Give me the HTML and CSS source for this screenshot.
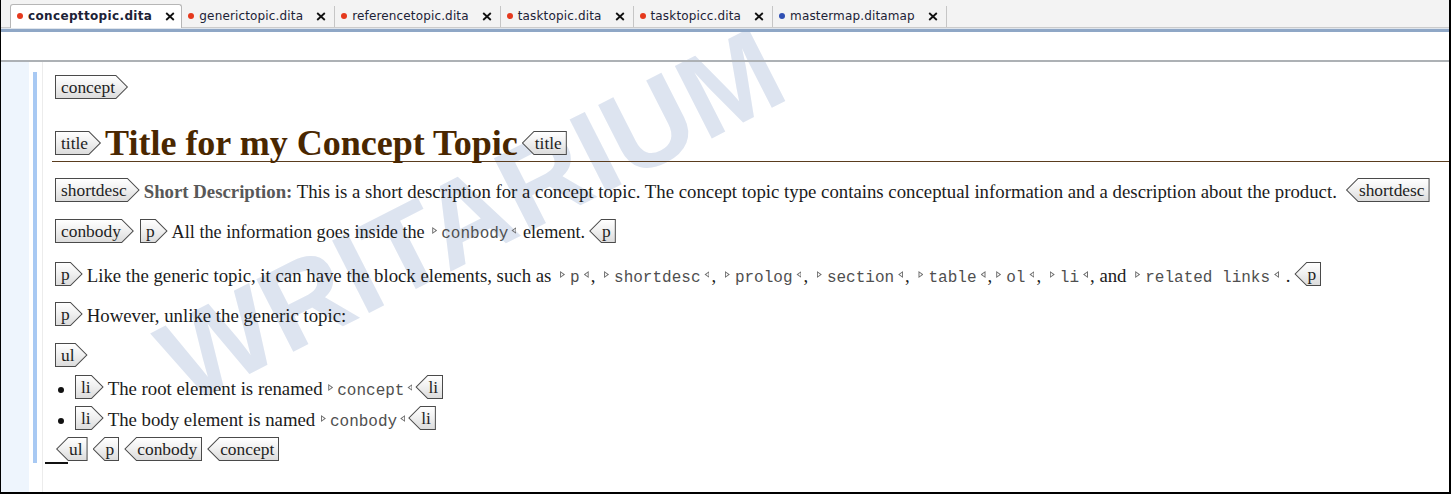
FILE: index.html
```html
<!DOCTYPE html>
<html>
<head>
<meta charset="utf-8">
<title>concepttopic.dita</title>
<link rel="stylesheet" href="styles.css">
</head>
<body>
<div class="window">
  <div class="tabbar">
    <div class="tab active"><span class="dot red"></span><span class="tname">concepttopic.dita</span><svg class="close" viewBox="0 0 10 9"><path d="M1.2 1L8.8 8M8.8 1L1.2 8"/></svg></div>
    <div class="tab"><span class="dot red"></span><span class="tname">generictopic.dita</span><svg class="close" viewBox="0 0 10 9"><path d="M1.2 1L8.8 8M8.8 1L1.2 8"/></svg></div>
    <div class="tab"><span class="dot red"></span><span class="tname">referencetopic.dita</span><svg class="close" viewBox="0 0 10 9"><path d="M1.2 1L8.8 8M8.8 1L1.2 8"/></svg></div>
    <div class="tab"><span class="dot red"></span><span class="tname">tasktopic.dita</span><svg class="close" viewBox="0 0 10 9"><path d="M1.2 1L8.8 8M8.8 1L1.2 8"/></svg></div>
    <div class="tab"><span class="dot red"></span><span class="tname">tasktopicc.dita</span><svg class="close" viewBox="0 0 10 9"><path d="M1.2 1L8.8 8M8.8 1L1.2 8"/></svg></div>
    <div class="tab"><span class="dot blue"></span><span class="tname">mastermap.ditamap</span><svg class="close" viewBox="0 0 10 9"><path d="M1.2 1L8.8 8M8.8 1L1.2 8"/></svg></div>
  </div>
  <div class="tabline"></div>
  <div class="toolbar"></div>
  <div class="editor">
    <div class="gutter"></div>
    <div class="margin"><div class="bar"></div></div>
    <div class="doc">
      <div class="row r-concept"><span class="tag s">concept</span></div>
      <div class="title-row"><span class="tag s">title</span><span class="title-text">Title for my Concept Topic</span><span class="tag e">title</span></div>
      <div class="row r-sd"><span class="tag s">shortdesc</span><b class="sd-label">Short Description:</b> This is a short description for a concept topic. The concept topic type contains conceptual information and a description about the product.<span class="tag e far">shortdesc</span></div>
      <div class="row r-body"><span class="tag s">conbody</span><span class="tag s next">p</span>All the information goes inside the <code>conbody</code> element.<span class="tag e">p</span></div>
      <div class="row r-p1"><span class="tag s">p</span>Like the generic topic, it can have the block elements, such as <code>p</code>, <code>shortdesc</code>, <code>prolog</code>, <code>section</code>, <code>table</code>,<code>ol</code>, <code>li</code>, and <code>related links</code> .<span class="tag e">p</span></div>
      <div class="row r-p2"><span class="tag s">p</span>However, unlike the generic topic:</div>
      <div class="row r-ul"><span class="tag s">ul</span></div>
      <div class="row r-li"><span class="bullet"></span><span class="tag s">li</span>The root element is renamed <code>concept</code><span class="tag e">li</span></div>
      <div class="row r-li"><span class="bullet"></span><span class="tag s">li</span>The body element is named <code>conbody</code><span class="tag e">li</span></div>
      <div class="row r-end"><span class="tag e first">ul</span><span class="tag e">p</span><span class="tag e">conbody</span><span class="tag e">concept</span></div>
      <div class="caret"></div>
    </div>
  </div>
  <div class="watermark">WRITARIUM</div>
</div>
</body>
</html>
```

FILE: styles.css
```css
* { box-sizing: border-box; }
html, body { margin: 0; padding: 0; background: #fff; }

.window {
  position: relative;
  width: 1451px;
  height: 494px;
  border-left: 1px solid #000;
  border-right: 2px solid #000;
  border-bottom: 2px solid #000;
  display: flex;
  flex-direction: column;
  overflow: hidden;
}

/* ---------- tabs ---------- */
.tabbar {
  height: 28px;
  flex: none;
  background: #f3f3f3;
  border-bottom: 1px solid #cbcbcb;
  display: flex;
  align-items: flex-end;
  padding-left: 9px;
  position: relative;
  z-index: 3;
}
.tab {
  display: flex;
  align-items: center;
  height: 21px;
  padding: 0 8px 1px 6px;
  border-right: 1px solid #c6c6c6;
  font: 12px "DejaVu Sans", sans-serif;
  letter-spacing: 0.15px;
  color: #1c2236;
  white-space: nowrap;
}
.tab.active {
  height: 24px;
  margin-bottom: -1px;
  background: #fff;
  border: 1px solid #b6b6b6;
  border-bottom: none;
  border-radius: 3px 3px 0 0;
  font-weight: bold;
  letter-spacing: 0.35px;
  padding: 0 6px 1px 6px;
}
.dot {
  width: 6px;
  height: 6px;
  border-radius: 50%;
  margin-right: 5px;
  flex: none;
}
.dot.red { background: #e5391d; }
.dot.blue { background: #2f4fb3; }
.close {
  width: 10px;
  height: 9px;
  margin-left: 13px;
  flex: none;
}
.close path { stroke: #111; stroke-width: 1.8; fill: none; }

.tabline {
  height: 4px;
  flex: none;
  background: #8fa7c6;
  border-top: 1px solid #dfe5ec;
  position: relative;
  z-index: 3;
}
.toolbar {
  height: 30px;
  flex: none;
  background: transparent;
  border-bottom: 2px solid #adb1b5;
  position: relative;
  z-index: 3;
}

/* ---------- editor ---------- */
.editor {
  flex: 1;
  display: flex;
  min-height: 0;
}
.gutter {
  width: 28px;
  flex: none;
  background: #eef5fd;
}
.margin {
  width: 14px;
  flex: none;
  border-right: 1px solid #ececec;
}
.bar {
  width: 4px;
  height: 391px;
  margin: 10px 0 0 4px;
  background: #a8c9f3;
}
.doc {
  flex: 1;
  padding: 13px 0 0 12px;
  position: relative;
  z-index: 2;
  font: 18.8px "Liberation Serif", "Times New Roman", serif;
  color: #1b1b1b;
}

.row {
  height: 27px;
  line-height: 27px;
  white-space: nowrap;
}
.r-concept { margin-bottom: 23px; }
.r-sd { margin-bottom: 14px; }
.r-body { margin-bottom: 16px; font-size: 18.2px; }
.r-p1 { margin-bottom: 13px; }
.r-p2 { margin-bottom: 14px; }
.r-ul { margin-bottom: 5px; }
.r-li { margin-bottom: 4px; }

.title-row {
  display: flex;
  align-items: center;
  height: 37px;
  margin-left: -3px;
  padding-left: 3px;
  border-bottom: 1px solid #5a3c1e;
  margin-bottom: 16px;
  white-space: nowrap;
}
.title-text {
  font: bold 36px/36px "Liberation Serif", "Times New Roman", serif;
  color: #4a2700;
}

/* ---------- tags ---------- */
.tag {
  display: inline-block;
  position: relative;
  isolation: isolate;
  height: 24px;
  vertical-align: top;
  font: 17.4px/22px "Liberation Serif", "Times New Roman", serif;
  color: #1e1e1e;
  background: #4a4a4a;
}
.tag::before {
  content: "";
  position: absolute;
  inset: 1px;
  z-index: -1;
  background: linear-gradient(#ffffff, #f1f1f1 45%, #dcdcdc);
}
.tag.s {
  padding: 1px 13px 0 6px;
  margin-right: 4px;
  clip-path: polygon(0 0, calc(100% - 12px) 0, 100% 50%, calc(100% - 12px) 100%, 0 100%);
}
.tag.s::before {
  clip-path: polygon(0 0, calc(100% - 11.4px) 0, calc(100% - 0.4px) 50%, calc(100% - 11.4px) 100%, 0 100%);
}
.tag.s.next { margin-left: 2px; }
.tag.e {
  padding: 1px 5px 0 13px;
  margin-left: 4px;
  clip-path: polygon(12px 0, 100% 0, 100% 100%, 12px 100%, 0 50%);
}
.tag.e::before {
  clip-path: polygon(11.4px 0, 100% 0, 100% 100%, 11.4px 100%, 0.4px 50%);
}
.tag.e.far { margin-left: 9px; }
.r-end .tag.e { margin-left: 5px; }
.r-end .tag.e.first { margin-left: 1px; }
.r-li .tag.e { margin-left: 3px; }

.sd-label {
  color: #585858;
}

/* inline element names */
code {
  font: 16px "Liberation Mono", "Courier New", monospace;
  color: #4f4f4f;
}
code::before,
code::after {
  content: "";
  display: inline-block;
  width: 5px;
  height: 7px;
  background: #707070;
  vertical-align: 4px;
}
code::before {
  margin: 0 5px 0 4px;
  clip-path: polygon(evenodd, 0 0, 100% 50%, 0 100%, 0 0, 1px 1.7px, 1px calc(100% - 1.7px), calc(100% - 1.7px) 50%, 1px 1.7px);
}
code::after {
  margin: 0 2px 0 4px;
  clip-path: polygon(evenodd, 100% 0, 0 50%, 100% 100%, 100% 0, calc(100% - 1px) 1.7px, calc(100% - 1px) calc(100% - 1.7px), 1.7px 50%, calc(100% - 1px) 1.7px);
}
.r-body code::before { margin: 0 4px 0 3px; }
.r-body code::after { margin: 0 2px 0 3px; }
.r-li code::before { margin: 0 4px 0 1px; }
.r-li code::after { margin: 0 0 0 3px; }

.bullet {
  display: inline-block;
  width: 6px;
  height: 6px;
  border-radius: 50%;
  background: #111;
  margin: 0 11px 0 3px;
  vertical-align: 2px;
}

.caret {
  width: 23px;
  height: 2px;
  background: #111;
  margin: -2px 0 0 -10px;
}

/* ---------- watermark ---------- */
.watermark {
  position: absolute;
  left: 470px;
  top: 215px;
  transform: translate(-50%, -50%) rotate(-27deg);
  font: bold 118px "Liberation Sans", Arial, sans-serif;
  color: #dde4f0;
  white-space: nowrap;
  z-index: 1;
  pointer-events: none;
}
```
